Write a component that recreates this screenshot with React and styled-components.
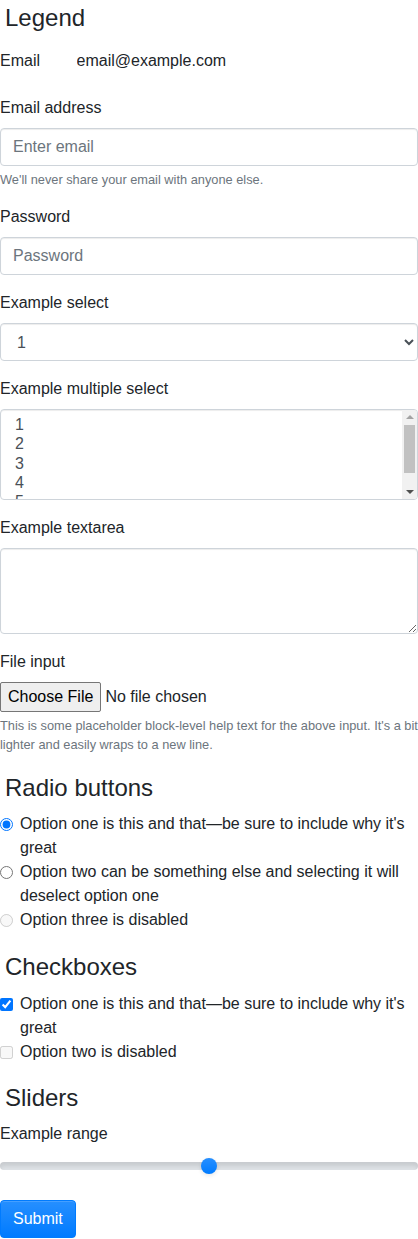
import React from "react";
import styled, { createGlobalStyle } from "styled-components";

const GlobalStyle = createGlobalStyle`
  *, *::before, *::after { box-sizing: border-box; }
  body {
    margin: 0;
    font-family: "Liberation Sans", Arial, sans-serif;
    font-size: 16px;
    font-weight: 400;
    line-height: 1.5;
    color: #212529;
    background: #fff;
  }
  input, button, select, textarea {
    margin: 0;
    font-family: inherit;
    font-size: inherit;
    line-height: inherit;
  }
`;

const Form = styled.form`
  display: block;
  width: 418px;
`;

const Fieldset = styled.fieldset`
  border: 0;
  margin: 0 0 ${(p) => p.$mb ?? 16}px;
  padding: ${(p) => p.$pt ?? 0}px 0 0;
  min-width: 0;
`;

const Legend = styled.legend`
  display: block;
  width: 100%;
  padding: 0 0 0 5px;
  margin-bottom: ${(p) => p.$mb ?? 6}px;
  font-size: 24px;
  line-height: 36px;
  color: inherit;
  float: left;
  & + * { clear: left; }
`;

const Group = styled.div`
  margin-bottom: ${(p) => p.$mb ?? 16}px;
`;

const PlainRow = styled.div`
  display: grid;
  grid-template-columns: 76.5px 1fr;
  margin-bottom: 16px;
`;

const ColLabel = styled.label`
  padding: 7px 0;
  line-height: 24px;
`;

const Plaintext = styled.input`
  display: block;
  width: 100%;
  padding: 6px 0;
  border: 1px solid transparent;
  border-width: 1px 0;
  background: transparent;
  color: #212529;
  line-height: 24px;
  outline: none;
`;

const Label = styled.label`
  display: inline-block;
  margin-bottom: 8px;
`;

const controlBase = `
  display: block;
  width: 100%;
  padding: 6px 12px;
  font-size: 16px;
  font-weight: 400;
  line-height: 1.5;
  color: #495057;
  background-color: #fff;
  background-clip: padding-box;
  border: 1px solid #ced4da;
  border-radius: 4px;
  box-shadow: inset 0 1px 1px rgba(0, 0, 0, 0.075);
  &::placeholder { color: #6c757d; opacity: 1; }
`;

const Control = styled.input`
  ${controlBase}
  height: 38px;
`;

const Select = styled.select`
  ${controlBase}
  height: ${(p) => (p.multiple ? "auto" : "38px")};
`;

const ListWrap = styled.div`
  position: relative;
`;

/* decorative classic scrollbar drawn over the listbox's right edge */
const ScrollBar = styled.div`
  position: absolute;
  top: 1px;
  right: 1px;
  bottom: 1px;
  width: 15px;
  background: #f1f1f1;
  border-top-right-radius: 3px;
  border-bottom-right-radius: 3px;
  display: flex;
  flex-direction: column;
  align-items: center;
  pointer-events: none;
`;

const Arrow = styled.div`
  flex: 0 0 15px;
  width: 15px;
  display: flex;
  align-items: center;
  justify-content: center;
  &::before {
    content: "";
    width: 0;
    height: 0;
    border-left: 4px solid transparent;
    border-right: 4px solid transparent;
    ${(p) =>
      p.$down
        ? "border-top: 4px solid #505050; margin-top: 1px;"
        : "border-bottom: 4px solid #a3a3a3; margin-top: -1px;"}
  }
`;

const Thumb = styled.div`
  width: 11px;
  height: 48px;
  background: #c1c1c1;
`;

const Track = styled.div`
  flex: 1 1 auto;
  display: flex;
  justify-content: center;
`;

const Textarea = styled.textarea`
  ${controlBase}
  height: auto;
  overflow: auto;
  resize: vertical;
`;

const FileInput = styled.input`
  display: block;
  width: 100%;
  line-height: 24px;
  &::file-selector-button {
    font: inherit;
    line-height: 24px;
    padding: 2px 7px;
    margin-right: 4px;
    color: #000;
    background: #efefef;
    border: 1px solid #767676;
    border-radius: 2px;
  }
`;

const Help = styled.small`
  display: block;
  margin-top: 4px;
  font-size: 80%;
  font-weight: 400;
  color: #6c757d;
`;

const Check = styled.div`
  display: flex;
  align-items: flex-start;
`;

const CheckInput = styled.input`
  flex: 0 0 auto;
  width: 13px;
  height: 13px;
  margin: 5.5px 7px 0 0;
  padding: 0;
`;

const CheckLabel = styled.label`
  color: inherit;
`;

const Range = styled.input`
  display: block;
  width: 100%;
  height: 22.4px;
  padding: 0;
  margin: 0;
  background: transparent;
  -webkit-appearance: none;
  appearance: none;
  &:focus { outline: none; }
  &::-webkit-slider-runnable-track {
    width: 100%;
    height: 8px;
    color: transparent;
    cursor: pointer;
    background-color: #dee2e6;
    border-color: transparent;
    border-radius: 16px;
    box-shadow: inset 0 4px 4px rgba(0, 0, 0, 0.1);
  }
  &::-webkit-slider-thumb {
    width: 16px;
    height: 16px;
    margin-top: -4px;
    background: #007bff linear-gradient(180deg, #268fff, #007bff) repeat-x;
    border: 0;
    border-radius: 16px;
    box-shadow: 0 1.6px 4px rgba(0, 0, 0, 0.1);
    -webkit-appearance: none;
    appearance: none;
  }
`;

const Button = styled.button`
  display: inline-block;
  font-weight: 400;
  color: #fff;
  text-align: center;
  vertical-align: middle;
  background: #007bff linear-gradient(180deg, #268fff, #007bff) repeat-x;
  border: 1px solid #007bff;
  padding: 6px 12px;
  font-size: 16px;
  line-height: 1.5;
  border-radius: 4px;
  box-shadow: inset 0 1px 0 rgba(255, 255, 255, 0.15), 0 1px 1px rgba(0, 0, 0, 0.075);
  cursor: pointer;
`;

const radios = [
  { id: "optionsRadios1", label: "Option one is this and that—be sure to include why it's great", checked: true },
  { id: "optionsRadios2", label: "Option two can be something else and selecting it will deselect option one" },
  { id: "optionsRadios3", label: "Option three is disabled", disabled: true },
];

const checks = [
  { id: "check1", label: "Option one is this and that—be sure to include why it's great", checked: true },
  { id: "check2", label: "Option two is disabled", disabled: true },
];

export default function App() {
  return (
    <>
      <GlobalStyle />
      <Form onSubmit={(e) => e.preventDefault()}>
        <Fieldset $mb={0}>
          <Legend>Legend</Legend>
          <PlainRow>
            <ColLabel htmlFor="staticEmail">Email</ColLabel>
            <Plaintext id="staticEmail" type="text" readOnly defaultValue="email@example.com" />
          </PlainRow>
          <Group>
            <Label htmlFor="exampleInputEmail1">Email address</Label>
            <Control id="exampleInputEmail1" type="email" placeholder="Enter email" />
            <Help>We'll never share your email with anyone else.</Help>
          </Group>
          <Group>
            <Label htmlFor="exampleInputPassword1">Password</Label>
            <Control id="exampleInputPassword1" type="password" placeholder="Password" />
          </Group>
          <Group>
            <Label htmlFor="exampleSelect1">Example select</Label>
            <Select id="exampleSelect1" defaultValue="1">
              {[1, 2, 3, 4, 5].map((n) => (
                <option key={n}>{n}</option>
              ))}
            </Select>
          </Group>
          <Group>
            <Label htmlFor="exampleSelect2">Example multiple select</Label>
            <ListWrap>
              <Select id="exampleSelect2" multiple defaultValue={[]}>
                {[1, 2, 3, 4, 5].map((n) => (
                  <option key={n}>{n}</option>
                ))}
              </Select>
              <ScrollBar aria-hidden="true">
                <Arrow />
                <Track>
                  <Thumb />
                </Track>
                <Arrow $down />
              </ScrollBar>
            </ListWrap>
          </Group>
          <Group>
            <Label htmlFor="exampleTextarea">Example textarea</Label>
            <Textarea id="exampleTextarea" rows={3} />
          </Group>
          <Group>
            <Label htmlFor="exampleInputFile">File input</Label>
            <FileInput id="exampleInputFile" type="file" />
            <Help>
              This is some placeholder block-level help text for the above input. It's a bit lighter and easily wraps
              to a new line.
            </Help>
          </Group>
          <Fieldset>
            <Legend>Radio buttons</Legend>
            {radios.map((r) => (
              <Check key={r.id}>
                <CheckInput type="radio" name="optionsRadios" id={r.id} defaultChecked={r.checked} disabled={r.disabled} />
                <CheckLabel htmlFor={r.id}>{r.label}</CheckLabel>
              </Check>
            ))}
          </Fieldset>
          <Fieldset $pt={1}>
            <Legend $mb={7}>Checkboxes</Legend>
            {checks.map((c) => (
              <Check key={c.id}>
                <CheckInput type="checkbox" id={c.id} defaultChecked={c.checked} disabled={c.disabled} />
                <CheckLabel htmlFor={c.id}>{c.label}</CheckLabel>
              </Check>
            ))}
          </Fieldset>
          <Fieldset $mb={0}>
            <Legend>Sliders</Legend>
            <Label htmlFor="customRange1">Example range</Label>
            <Group $mb={23}>
              <Range type="range" id="customRange1" />
            </Group>
          </Fieldset>
          <Button type="submit">Submit</Button>
        </Fieldset>
      </Form>
    </>
  );
}
